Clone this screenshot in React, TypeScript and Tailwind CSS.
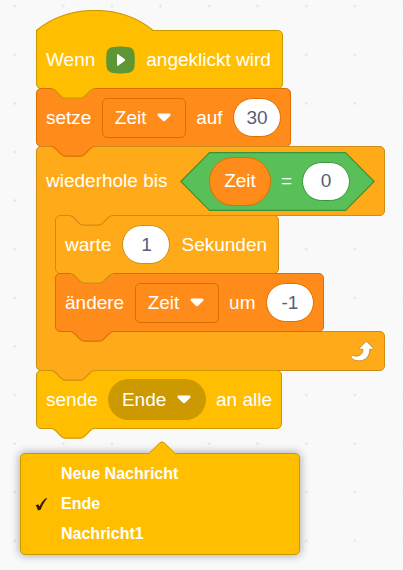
import { useState, type ReactNode } from "react";

type Tone = "events" | "data" | "control";

const boxTone: Record<Tone, string> = {
  events: "border-[#cc9900] bg-[#ffbf00]",
  data: "border-[#db6e00] bg-[#ff8c1a]",
  control: "border-[#cf8b17] bg-[#ffab19]",
};

const tabTone: Record<Tone, { fill: string; stroke: string }> = {
  events: { fill: "#ffbf00", stroke: "#cc9900" },
  data: { fill: "#ff8c1a", stroke: "#db6e00" },
  control: { fill: "#ffab19", stroke: "#cf8b17" },
};

const tabEdge =
  "M0 0 C2.4 0 3.6 1.2 4.9 2.4 L9.7 7.3 C10.9 8.5 12.2 9.7 14.6 9.7 H29.2 C31.6 9.7 32.8 8.5 34 7.3 L38.9 2.4 C40.1 1.2 41.3 0 43.8 0";

/* The connector that hangs below an edge and fills the notch of the next block. */
function Tab({ tone, className = "-bottom-[11px]" }: { tone: Tone; className?: string }) {
  const { fill, stroke } = tabTone[tone];
  return (
    <svg
      viewBox="0 -0.5 44 11"
      className={`pointer-events-none absolute left-[14px] z-10 h-[11px] w-11 overflow-visible ${className}`}
      aria-hidden="true"
    >
      <path d={tabEdge + " V-1 H0 Z"} fill={fill} />
      <path d={tabEdge} fill="none" stroke={stroke} strokeWidth="1.2" />
    </svg>
  );
}

function Block({
  tone,
  className,
  children,
}: {
  tone: Tone;
  className: string;
  children: ReactNode;
}) {
  return (
    <div
      className={`relative -mt-px flex h-[59px] items-center border px-[9px] ${boxTone[tone]} ${className}`}
    >
      {children}
      <Tab tone={tone} />
    </div>
  );
}

function Caret() {
  return (
    <svg viewBox="0 0 14 9" className="h-[9px] w-[14px]" aria-hidden="true">
      <path
        d="M2 .5 H12 C13.6 .5 14 2 13 3 L8.4 7.6 C7.6 8.4 6.4 8.4 5.6 7.6 L1 3 C0 2 .4 .5 2 .5 Z"
        fill="#fff"
      />
    </svg>
  );
}

function VariableSelect({ label }: { label: string }) {
  return (
    <span className="relative block">
      <select
        aria-label={label}
        className="block h-10 w-[84px] appearance-none rounded-[5px] border border-[#db6e00] bg-[#ff8c1a] pl-3 text-white outline-none"
      >
        <option>Zeit</option>
      </select>
      <span className="pointer-events-none absolute inset-y-0 right-[15px] flex items-center">
        <Caret />
      </span>
    </span>
  );
}

function ValueInput({
  label,
  value,
  className,
}: {
  label: string;
  value: string;
  className: string;
}) {
  return (
    <input
      type="text"
      aria-label={label}
      defaultValue={value}
      className={`h-[39px] w-12 shrink-0 rounded-full border bg-white text-center text-[#575e75] outline-none ${className}`}
    />
  );
}

function Grid() {
  return (
    <svg className="absolute inset-0 h-full w-full" aria-hidden="true">
      <defs>
        <pattern id="dots" x="-9.6" y="-18.1" width="48.6" height="48.6" patternUnits="userSpaceOnUse">
          <rect x="23.3" y="23.3" width="2" height="2" fill="#dddddd" />
        </pattern>
      </defs>
      <rect width="100%" height="100%" fill="url(#dots)" />
    </svg>
  );
}

const messages = ["Neue Nachricht", "Ende", "Nachricht1"];

export default function App() {
  const [selected, setSelected] = useState("Ende");

  return (
    <main className="relative min-h-screen overflow-hidden bg-[#f9f9f9] font-['Liberation_Sans',Arial,sans-serif] text-[19px] leading-6 text-white">
      <Grid />
      <div className="relative flex flex-col items-start pt-[10px] pl-9">
        <svg viewBox="0 0 118 21" className="relative z-10 block h-[21px] w-[118px]" aria-hidden="true">
          <path d="M1 21 V20 C31 -6.2 87 -6.2 117 20.5 V21 Z" fill="#ffbf00" />
          <path d="M.5 21 V20.5 C31 -6.2 87 -6.2 117 20.5" fill="none" stroke="#cc9900" strokeWidth="1.2" />
        </svg>
        <Block tone="events" className="w-[247px] gap-[11px] rounded-[5px] rounded-tl-none">
          <span>Wenn</span>
          <svg viewBox="0 0 29 28" className="h-7 w-[29px]" role="img" aria-label="Start">
            <path
              d="M10 .8 Q14.5 .1 19 .8 C25.5 .8 28.5 3.5 28.5 8.5 Q29.2 14 28.5 19.5 C28.5 24.5 25.5 27.2 19 27.2 Q14.5 27.9 10 27.2 C3.5 27.2 .5 24.5 .5 19.5 Q-.2 14 .5 8.5 C.5 3.5 3.5 .8 10 .8 Z"
              fill="#5f9635"
            />
            <path d="M11 9 Q11 7.6 12.4 8.4 L18.6 13 Q19.6 14 18.6 15 L12.4 19.6 Q11 20.4 11 19 Z" fill="#fff" />
          </svg>
          <span>angeklickt wird</span>
        </Block>
        <Block tone="data" className="w-[255px] justify-between rounded-[5px]">
          <span>setze</span>
          <VariableSelect label="Variable setzen" />
          <span>auf</span>
          <ValueInput label="Neuer Wert" value="30" className="border-[#db6e00]" />
        </Block>

        <div className="relative -mt-px w-[349px]">
          <div className="flex h-[70px] items-center justify-between rounded-[5px] rounded-bl-none border border-[#cf8b17] bg-[#ffab19] px-[9px]">
            <span>wiederhole bis</span>
            <div className="relative flex h-[59px] w-[195px] items-center justify-between pr-[25px] pl-[29px]">
              <svg viewBox="0 0 195 59" className="absolute inset-0 h-full w-full" aria-hidden="true">
                <path
                  d="M.8 29.5 L29.5 .6 H165.5 L194.2 29.5 L165.5 58.4 H29.5 Z"
                  fill="#59c059"
                  stroke="#389438"
                  strokeWidth="1.2"
                />
              </svg>
              <span className="relative flex h-[49px] w-[62px] items-center justify-center rounded-full border border-[#db6e00] bg-[#ff8c1a]">
                Zeit
              </span>
              <span className="relative">=</span>
              <ValueInput label="Vergleichswert" value="0" className="relative border-[#389438]" />
            </div>
          </div>
          <div className="relative z-10 -my-px flex items-stretch">
            <div className="-mr-[5px] w-6 border-l border-[#cf8b17] bg-[#ffab19]" />
            <div className="relative flex flex-col items-start pt-px">
              <Block tone="control" className="w-[224px] gap-[11px] rounded-[5px]">
                <span>warte</span>
                <ValueInput label="Sekunden" value="1" className="border-[#cf8b17]" />
                <span>Sekunden</span>
              </Block>
              <Block tone="data" className="w-[269px] justify-between rounded-[5px]">
                <span>ändere</span>
                <VariableSelect label="Variable ändern" />
                <span>um</span>
                <ValueInput label="Änderung" value="-1" className="border-[#db6e00]" />
              </Block>
              <Tab tone="control" className="top-0" />
            </div>
          </div>
          <div className="relative flex h-10 items-center justify-end rounded-[5px] rounded-tl-none border border-[#cf8b17] bg-[#ffab19] pr-[9px]">
            <svg viewBox="0 0 25 22" className="h-[22px] w-[25px]" aria-hidden="true">
              <path
                d="M15.7 1.8 C16.1 1.4 16.6 1.4 17 1.8 L23 7.7 C23.6 8.4 23.3 9.3 22.3 9.3 H19.8 C20 13.2 18.6 16.6 15.6 18.9 C11.8 21.6 5.8 21.5 2.2 18.8 C1 17.9 .6 16.4 1.2 15.7 C1.8 15 2.6 15.4 3.6 15.7 C6.8 16.7 10 15.9 11.7 13.6 C12.6 12.4 13 10.9 12.9 9.3 H10.6 C9.6 9.3 9.2 8.4 9.8 7.7 Z"
                fill="#fff"
                stroke="#cf8b17"
                strokeWidth="1"
              />
            </svg>
            <Tab tone="control" />
          </div>
        </div>

        <Block tone="events" className="w-[246px] justify-between rounded-[5px]">
          <span>sende</span>
          <button
            type="button"
            aria-haspopup="listbox"
            aria-expanded="true"
            aria-controls="messages"
            className="flex h-[41px] w-[98px] items-center justify-between rounded-full bg-[#cc9900] pr-[15px] pl-[14px]"
          >
            <span>{selected}</span>
            <Caret />
          </button>
          <span>an alle</span>
        </Block>
      </div>

      <div className="relative mx-5 mt-6 mb-4 max-w-[280px] rounded-[5px] border border-[#cc9900] bg-[#ffbf00] py-[5px] text-base font-bold shadow-[0_0_8px_1px_rgba(0,0,0,0.3)]">
        <svg viewBox="0 0 30 14" className="absolute -top-[13px] left-[126px] h-[14px] w-[30px]" aria-hidden="true">
          <path d="M1 13 L12.5 2 Q15 -.4 17.5 2 L29 13 V14 H1 Z" fill="#ffbf00" />
          <path d="M1 13.5 L12.5 2 Q15 -.4 17.5 2 L29 13.5" fill="none" stroke="#cc9900" strokeWidth="1" />
        </svg>
        <ul id="messages" role="listbox" aria-label="Nachricht">
          {messages.map((message) => (
            <li key={message} role="option" aria-selected={message === selected}>
              <button
                type="button"
                onClick={() => setSelected(message)}
                className="flex h-[30px] w-full items-center text-left"
              >
                <span className="flex w-10 justify-center">
                  {message === selected && (
                    <svg viewBox="0 0 13 13" className="h-[13px] w-[13px]" aria-hidden="true">
                      <path
                        d="M.6 7.6 L3.2 6.2 L4.7 8.4 C6.2 5 8.2 2.2 10.4 .6 L12.4 .3 C9.5 3.6 7.3 7.4 5.6 11.8 L2.9 12.5 C2.5 10.5 1.8 8.8 .6 7.6 Z"
                        fill="#2b2000"
                      />
                    </svg>
                  )}
                </span>
                {message}
              </button>
            </li>
          ))}
        </ul>
      </div>
    </main>
  );
}
